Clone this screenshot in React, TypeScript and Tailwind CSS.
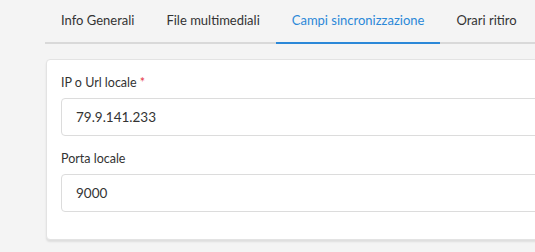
export default function App() {
  const tabs = ['Info Generali', 'File multimediali', 'Campi sincronizzazione', 'Orari ritiro']
  const active = 2

  return (
    <div className="h-[252px] w-[535px] overflow-hidden bg-[#f4f4f4] pl-[45px] font-['Lato',sans-serif] text-[#333333]">
      <div className="flex h-[44px] w-[600px] border-b-2 border-[#d9d9d9]">
        {tabs.map((t, i) => (
          <div
            key={t}
            className={
              i === active
                ? '-mb-[2px] flex items-center whitespace-nowrap border-b-2 border-[#2b88d8] px-4 text-[13px] text-[#2b88d8]'
                : 'flex items-center whitespace-nowrap px-4 text-[13px]'
            }
          >
            {t}
          </div>
        ))}
      </div>

      <div className="mt-[15px] ml-px w-[600px] rounded-[4px] border border-[#e3e3e3] bg-white px-[14px] pt-[13px] pb-[27px] shadow-[0_2px_2px_rgba(0,0,0,0.09)]">
        <label className="block text-[12.5px] leading-[20px]">
          IP o Url locale <span className="text-[#e53945]">*</span>
        </label>
        <div className="mt-[5px] flex h-[38px] items-center rounded-[4px] border border-[#dcdcdc] px-[14px] text-[13.5px]">
          79.9.141.233
        </div>

        <label className="mt-[13px] block text-[12.5px] leading-[20px]">Porta locale</label>
        <div className="mt-[5px] flex h-[38px] items-center rounded-[4px] border border-[#dcdcdc] px-[14px] text-[13.5px]">
          9000
        </div>
      </div>
    </div>
  )
}
